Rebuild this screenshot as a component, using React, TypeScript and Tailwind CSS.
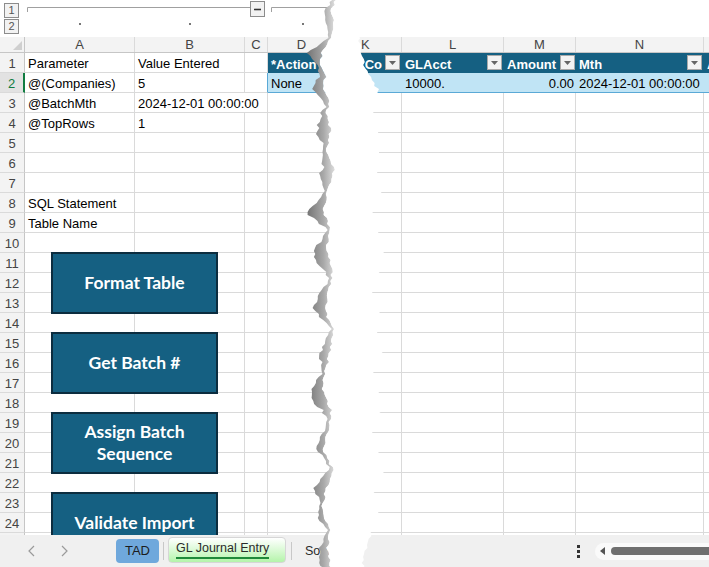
import React from 'react';

type Cell = { a?: string; b?: string };

const leftRows: Record<number, Cell> = {
  4: { a: '@TopRows', b: '1' },
  8: { a: 'SQL Statement' },
  9: { a: 'Table Name' },
};

const rowNums = Array.from({ length: 25 }, (_, i) => i + 1);

const buttons = [
  { lines: ['Format Table'], pos: 'top-[215px]' },
  { lines: ['Get Batch #'], pos: 'top-[295px]' },
  { lines: ['Assign Batch', 'Sequence'], pos: 'top-[375px]' },
  { lines: ['Validate Import'], pos: 'top-[455px]' },
];

const cell =
  'shrink-0 h-full border-r border-b border-[#dadada] flex items-end px-[3px] pb-px leading-[15px] whitespace-nowrap overflow-hidden';
const head = 'shrink-0 h-full flex items-end px-[3px] pb-px leading-[15px] whitespace-nowrap overflow-hidden bg-[#156082] text-white font-bold';
const band = 'shrink-0 h-full flex items-end px-[3px] pb-px leading-[15px] whitespace-nowrap overflow-hidden bg-[#c0e4f5] border-b border-[#5aa9d6]';
const colHead = 'shrink-0 h-full border-r border-[#dadada] flex items-center justify-center text-[#444]';

// torn paper edge: [y, left edge, right edge]
const ctrl: [number, number, number][] = [
  [-4, 337, 352], [12, 331, 350], [26, 334, 354], [40, 329, 359], [52, 322, 361],
  [64, 320, 364], [76, 326, 371], [88, 322, 377], [100, 330, 381], [114, 326, 373],
  [130, 331, 379], [150, 326, 381], [170, 334, 375], [190, 328, 383], [210, 323, 371],
  [230, 331, 378], [250, 326, 385], [270, 333, 379], [290, 329, 373], [310, 325, 381],
  [330, 333, 376], [350, 330, 384], [370, 326, 372], [390, 322, 378], [410, 331, 383],
  [430, 328, 370], [450, 323, 379], [470, 333, 384], [490, 326, 373], [510, 322, 380],
  [530, 330, 372], [550, 327, 366], [572, 332, 362],
];

const rnd = (n: number) => {
  const s = Math.sin(n * 127.1 + 311.7) * 43758.5453;
  return s - Math.floor(s);
};

const interp = (y: number, k: 1 | 2) => {
  for (let i = 0; i < ctrl.length - 1; i++) {
    const y0 = ctrl[i][0];
    const y1 = ctrl[i + 1][0];
    if (y >= y0 && y <= y1) {
      const t = (y - y0) / (y1 - y0);
      return ctrl[i][k] + (ctrl[i + 1][k] - ctrl[i][k]) * t;
    }
  }
  return ctrl[ctrl.length - 1][k];
};

function makeTear() {
  const teeth: { y: number; len: number; w: number }[] = [];
  let ty = -6;
  let k = 0;
  while (ty < 590) {
    const len = 22 + rnd(k) * 28;
    teeth.push({ y: ty, len, w: 4 + rnd(k + 40) * 15 });
    ty += len;
    k++;
  }
  const toothW = (y: number) => {
    const t = teeth.find((tt) => y >= tt.y && y < tt.y + tt.len);
    if (!t) return 2;
    const p = (y - t.y) / t.len;
    const shape = p < 0.6 ? p / 0.6 : (1 - p) / 0.4;
    return 1.5 + t.w * shape;
  };
  const left: string[] = [];
  const right: string[] = [];
  const outer: string[] = [];
  let i = 0;
  for (let y = -4; y <= 572; y += 3) {
    const xl = interp(y, 1) + (rnd(i + 1000) - 0.5) * 3;
    const xr = interp(y, 2) + (rnd(i + 3000) - 0.5) * 4;
    left.push(`${xl.toFixed(1)},${y}`);
    right.push(`${xr.toFixed(1)},${y}`);
    outer.push(`${(xl - toothW(y) - rnd(i + 5000) * 1.5).toFixed(1)},${y}`);
    i++;
  }
  return {
    white: [...left, ...right.slice().reverse()].join(' '),
    shadow: [...outer, ...left.slice().reverse()].join(' '),
  };
}

const tear = makeTear();

function FilterBtn() {
  return (
    <span className="w-[15px] h-[15px] shrink-0 self-center bg-[#f3f3f3] border border-[#a9a9a9] flex items-center justify-center">
      <svg width="7" height="4" viewBox="0 0 7 4">
        <path d="M0 0h7L3.5 4z" fill="#666" />
      </svg>
    </span>
  );
}

function RowHead({ n }: { n: number }) {
  const active = n === 2;
  return (
    <div
      className={`w-[25px] shrink-0 h-full flex items-end justify-center pb-px leading-[15px] border-b ${
        active
          ? 'bg-[#e2e2e2] text-[#107c41] border-b-[#dadada] border-r-2 border-r-[#107c41]'
          : 'bg-[#f3f3f3] text-[#444] border-[#dadada] border-r border-r-[#c6c6c6]'
      }`}
    >
      {n < 25 ? n : ''}
    </div>
  );
}

function LeftRow({ n }: { n: number }) {
  if (n === 1) {
    return (
      <div className="flex h-[20px] shrink-0">
        <RowHead n={n} />
        <div className={`${cell} w-[110px]`}>Parameter</div>
        <div className={`${cell} w-[110px]`}>Value Entered</div>
        <div className={`${cell} w-[23px]`} />
        <div className={`${head} w-[68px]`}>*Action</div>
        <div className={`${head} w-[60px]`} />
      </div>
    );
  }
  if (n === 2) {
    return (
      <div className="flex h-[20px] shrink-0">
        <RowHead n={n} />
        <div className={`${cell} w-[110px]`}>@(Companies)</div>
        <div className={`${cell} w-[110px]`}>5</div>
        <div className={`${cell} w-[23px] border-r-[#5aa9d6]`} />
        <div className={`${band} w-[68px]`}>None</div>
        <div className={`${band} w-[60px]`} />
      </div>
    );
  }
  if (n === 3) {
    return (
      <div className="flex h-[20px] shrink-0">
        <RowHead n={n} />
        <div className={`${cell} w-[110px]`}>@BatchMth</div>
        <div className={`${cell} w-[133px]`}>2024-12-01 00:00:00</div>
        <div className={`${cell} w-[68px]`} />
        <div className={`${cell} w-[60px]`} />
      </div>
    );
  }
  const d = leftRows[n] || {};
  return (
    <div className="flex h-[20px] shrink-0">
      <RowHead n={n} />
      <div className={`${cell} w-[110px]`}>{d.a}</div>
      <div className={`${cell} w-[110px]`}>{d.b}</div>
      <div className={`${cell} w-[23px]`} />
      <div className={`${cell} w-[68px]`} />
      <div className={`${cell} w-[60px]`} />
    </div>
  );
}

function RightRow({ n }: { n: number }) {
  if (n === 1) {
    return (
      <div className="flex h-[20px] shrink-0">
        <div className={`${head} w-[62px] justify-end gap-[3px] pr-[2px]`}>
          <span>GLCo</span>
          <FilterBtn />
        </div>
        <div className={`${head} w-[102px] justify-between pr-[2px]`}>
          <span>GLAcct</span>
          <FilterBtn />
        </div>
        <div className={`${head} w-[72px] justify-between pr-px`}>
          <span>Amount</span>
          <FilterBtn />
        </div>
        <div className={`${head} w-[128px] justify-between pr-[2px]`}>
          <span>Mth</span>
          <FilterBtn />
        </div>
        <div className={`${head} w-[60px]`}>A</div>
      </div>
    );
  }
  if (n === 2) {
    return (
      <div className="flex h-[20px] shrink-0">
        <div className={`${band} w-[62px]`} />
        <div className={`${band} w-[102px]`}>10000.</div>
        <div className={`${band} w-[72px] justify-end pr-[2px]`}>0.00</div>
        <div className={`${band} w-[128px]`}>2024-12-01 00:00:00</div>
        <div className={`${band} w-[60px]`} />
      </div>
    );
  }
  return (
    <div className="flex h-[20px] shrink-0">
      <div className={`${cell} w-[62px]`} />
      <div className={`${cell} w-[102px]`} />
      <div className={`${cell} w-[72px]`} />
      <div className={`${cell} w-[128px]`} />
      <div className={`${cell} w-[60px]`} />
    </div>
  );
}

function Chevron({ dir }: { dir: 'l' | 'r' }) {
  return (
    <svg width="9" height="12" viewBox="0 0 9 12" className="shrink-0">
      <path d={dir === 'l' ? 'M7 1L2 6l5 5' : 'M2 1l5 5-5 5'} fill="none" stroke="#9a9a9a" strokeWidth="1.2" />
    </svg>
  );
}

export default function App() {
  return (
    <div className="relative w-[709px] h-[567px] overflow-hidden bg-white flex text-[13px] text-black font-['Liberation_Sans',Arial,sans-serif]">
      {/* left piece */}
      <div className="w-[340px] shrink-0 h-full overflow-hidden flex flex-col">
        <div className="h-[37px] shrink-0 flex">
          <div className="w-[25px] shrink-0 pl-[4px] pt-[3px] flex flex-col gap-px">
            <div className="w-[15px] h-[15px] border border-[#8c8c8c] bg-[#f2f2f2] text-[11px] leading-none text-[#555] flex items-center justify-center">1</div>
            <div className="w-[15px] h-[15px] border border-[#8c8c8c] bg-[#f2f2f2] text-[11px] leading-none text-[#555] flex items-center justify-center">2</div>
          </div>
          <svg width="315" height="37" viewBox="0 0 315 37" className="shrink-0">
            <path d="M2.5 12V7.5H225" fill="none" stroke="#a0a0a0" />
            <rect x="225.5" y="1.5" width="14" height="15" fill="#f2f2f2" stroke="#8c8c8c" />
            <path d="M229 9.5h7" stroke="#333" strokeWidth="1.6" />
            <path d="M246.5 12V7.5H315" fill="none" stroke="#a0a0a0" />
            <rect x="54" y="23" width="2" height="2" fill="#777" />
            <rect x="164" y="23" width="2" height="2" fill="#777" />
            <rect x="277" y="23" width="2" height="2" fill="#777" />
          </svg>
        </div>
        <div className="relative h-[498px] shrink-0 overflow-hidden flex flex-col">
          <div className="flex h-[16px] shrink-0 bg-[#f3f3f3] border-b border-[#c6c6c6]">
            <div className="w-[25px] shrink-0 h-full border-r border-[#c6c6c6] flex items-end justify-end p-[2px]">
              <svg width="9" height="9" viewBox="0 0 9 9">
                <path d="M9 0V9H0z" fill="#cfcfcf" />
              </svg>
            </div>
            <div className={`${colHead} w-[110px]`}>A</div>
            <div className={`${colHead} w-[110px]`}>B</div>
            <div className={`${colHead} w-[23px]`}>C</div>
            <div className={`${colHead} w-[68px]`}>D</div>
            <div className={`${colHead} w-[60px]`}>E</div>
          </div>
          {rowNums.map((n) => (
            <LeftRow key={n} n={n} />
          ))}
          {buttons.map((b) => (
            <div
              key={b.lines[0]}
              className={`absolute ${b.pos} left-[51px] w-[167px] h-[62px] bg-[#156082] border-2 border-[#0c2d3f] flex flex-col items-center justify-center text-white font-bold text-[17.5px] leading-[22px] font-['Lato',sans-serif]`}
            >
              {b.lines.map((l) => (
                <span key={l}>{l}</span>
              ))}
            </div>
          ))}
        </div>
        <div className="h-[32px] shrink-0 bg-[#f0f0f0] flex items-center text-[12.5px] text-[#2b2b2b]">
          <div className="ml-[27px]">
            <Chevron dir="l" />
          </div>
          <div className="ml-[24px]">
            <Chevron dir="r" />
          </div>
          <div className="ml-[47px] w-[43px] h-[24px] shrink-0 rounded-[4px] bg-[#6fa8dc] flex items-center justify-center text-[13px] text-[#1c1c1c]">
            TAD
          </div>
          <div className="ml-[4px] w-px h-[18px] bg-[#c8c8c8] shrink-0" />
          <div className="ml-[4px] w-[118px] h-[26px] mb-[3px] shrink-0 rounded-[4px] border border-[#d6d6d6] bg-gradient-to-b from-white to-[#b4f4aa] flex items-center px-[7px]">
            <span className="leading-[16px] pb-[1px] border-b-2 border-[#1f8a3a] whitespace-nowrap">GL Journal Entry</span>
          </div>
          <div className="ml-[5px] w-px h-[18px] bg-[#c8c8c8] shrink-0" />
          <span className="ml-[13px] whitespace-nowrap">Source Data</span>
        </div>
      </div>

      {/* right piece */}
      <div className="w-[369px] shrink-0 h-full overflow-hidden flex flex-col">
        <div className="h-[37px] shrink-0" />
        <div className="h-[498px] shrink-0 overflow-hidden flex flex-col">
          <div className="flex h-[16px] shrink-0 bg-[#f3f3f3] border-b border-[#c6c6c6]">
            <div className={`${colHead} w-[62px] justify-start pl-[21px]`}>K</div>
            <div className={`${colHead} w-[102px]`}>L</div>
            <div className={`${colHead} w-[72px]`}>M</div>
            <div className={`${colHead} w-[128px]`}>N</div>
            <div className={`${colHead} w-[60px]`}>O</div>
          </div>
          {rowNums.map((n) => (
            <RightRow key={n} n={n} />
          ))}
        </div>
        <div className="h-[32px] shrink-0 bg-[#f0f0f0] flex items-center">
          <div className="ml-[237px] flex flex-col gap-[2px]">
            <span className="w-[3px] h-[3px] bg-[#333]" />
            <span className="w-[3px] h-[3px] bg-[#333]" />
            <span className="w-[3px] h-[3px] bg-[#333]" />
          </div>
          <div className="ml-[15px] flex-1 h-[17px] rounded-l-full bg-[#fafafa] flex items-center pl-[5px]">
            <svg width="5" height="8" viewBox="0 0 5 8">
              <path d="M5 0V8L0 4z" fill="#555" />
            </svg>
            <div className="ml-[6px] flex-1 h-[8px] rounded-l-full bg-[#6f6f6f]" />
          </div>
        </div>
      </div>

      {/* torn paper overlay */}
      <svg width="709" height="567" viewBox="0 0 709 567" className="absolute left-0 top-0 pointer-events-none">
        <defs>
          <linearGradient id="tearShade" gradientUnits="userSpaceOnUse" x1="306" y1="0" x2="338" y2="0">
            <stop offset="0" stopColor="#707070" />
            <stop offset="0.55" stopColor="#a9a9a9" />
            <stop offset="1" stopColor="#ececec" />
          </linearGradient>
        </defs>
        <polygon points={tear.shadow} fill="url(#tearShade)" />
        <polygon points={tear.white} fill="#ffffff" />
      </svg>
    </div>
  );
}
